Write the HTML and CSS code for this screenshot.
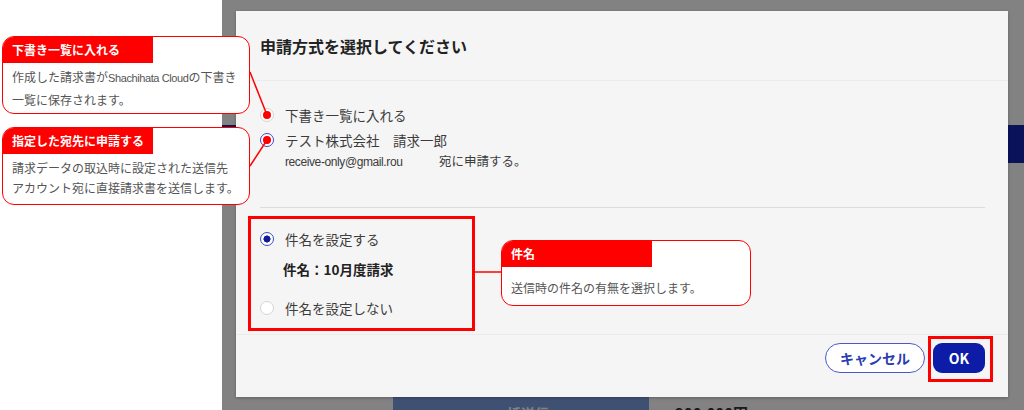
FILE: index.html
```html
<!DOCTYPE html>
<html lang="ja">
<head>
    <meta charset="UTF-8">
    <meta name="viewport" content="width=device-width, initial-scale=1.0">
    <title>申請方式の選択</title>
    <link rel="stylesheet" href="styles.css">
</head>
<body>
    <div class="screen">
        <div class="gutter"></div>

        <div class="app">
            <div class="app-band"></div>
            <div class="app-row">
                <div class="app-cell">一括送信</div>
                <div class="app-amount">200,000円</div>
            </div>

            <div class="overlay">
                <div class="dialog">
                    <div class="dialog-head">
                        <h2 class="dialog-title">申請方式を選択してください</h2>
                    </div>

                    <div class="dialog-body">
                        <div class="option">
                            <span class="radio"></span>
                            <span>下書き一覧に入れる</span>
                        </div>
                        <div class="option option-next">
                            <span class="radio is-on"></span>
                            <span>テスト株式会社　請求一郎</span>
                        </div>
                        <div class="option-sub"><span class="latin">receive-only@gmail.rou</span>　宛に申請する。</div>

                        <hr class="divider">

                        <div class="choice-box">
                            <div class="option">
                                <span class="radio is-on"></span>
                                <span>件名を設定する</span>
                            </div>
                            <div class="subject">件名：10月度請求</div>
                            <div class="option option-last">
                                <span class="radio"></span>
                                <span>件名を設定しない</span>
                            </div>
                        </div>
                    </div>

                    <div class="dialog-foot">
                        <button type="button" class="btn btn-outline">キャンセル</button>
                        <button type="button" class="btn btn-primary">OK</button>
                    </div>
                </div>
            </div>
        </div>

        <!-- annotations drawn over the screenshot -->
        <div class="notes">
            <svg class="links" width="1024" height="410" viewBox="0 0 1024 410">
                <line x1="250" y1="72" x2="267" y2="115" stroke="#ff0000" stroke-width="1.5"/>
                <line x1="250" y1="166" x2="267" y2="140" stroke="#ff0000" stroke-width="1.5"/>
                <line x1="475" y1="272" x2="501" y2="272" stroke="#ff0000" stroke-width="1.5"/>
                <circle cx="267" cy="115" r="4" fill="#ff0000"/>
                <circle cx="267" cy="140" r="4" fill="#ff0000"/>
            </svg>

            <div class="callout callout-draft">
                <div class="callout-head">下書き一覧に入れる</div>
                <div class="callout-body">作成した請求書が<span class="latin-sm">Shachihata Cloud</span>の下書き<br>一覧に保存されます。</div>
            </div>

            <div class="callout callout-send">
                <div class="callout-head">指定した宛先に申請する</div>
                <div class="callout-body">請求データの取込時に設定された送信先<br>アカウント宛に直接請求書を送信します。</div>
            </div>

            <div class="callout callout-subject">
                <div class="callout-head">件名</div>
                <div class="callout-body">送信時の件名の有無を選択します。</div>
            </div>

            <div class="mark-ok"></div>
        </div>
    </div>
</body>
</html>
```

FILE: styles.css
```css
html, body {
    margin: 0;
    padding: 0;
}
body {
    font-family: "Noto Sans CJK JP", "Noto Sans", sans-serif;
    background-color: #fff;
}
.screen {
    position: relative;
    display: flex;
    width: 1024px;
    height: 410px;
    overflow: hidden;
}
.gutter {
    width: 222px;
    flex: none;
    background-color: #fff;
}

/* page underneath the modal */
.app {
    position: relative;
    flex: 1;
    background-color: #fff;
}
.app-band {
    margin-top: 125px;
    height: 38px;
    background-color: #1524b0;
}
.app-row {
    display: flex;
    margin-top: 234px;
}
.app-cell {
    width: 256px;
    height: 30px;
    margin-left: 171px;
    padding-top: 6px;
    box-sizing: border-box;
    background-color: #7ca0e0;
    color: #fff;
    font-size: 14px;
    font-weight: bold;
    text-align: center;
}
.app-amount {
    margin-left: 26px;
    padding-top: 5px;
    font-size: 15px;
    font-weight: bold;
    color: #333;
}

/* modal */
.overlay {
    position: absolute;
    top: 0;
    left: 0;
    right: 0;
    bottom: 0;
    padding: 11px 16px 0 14px;
    background-color: rgba(0, 0, 0, 0.49);
}
.dialog {
    display: flex;
    flex-direction: column;
    height: 386px;
    background-color: #f5f5f5;
    box-shadow: 0 1px 3px rgba(0, 0, 0, 0.25);
}
.dialog-head {
    display: flex;
    align-items: center;
    height: 70px;
    box-sizing: border-box;
    padding: 0 24px;
    border-bottom: 1px solid #ebebeb;
}
.dialog-title {
    margin: 0;
    font-size: 16px;
    font-weight: bold;
    color: #222;
}
.dialog-body {
    flex: 1;
    padding: 24px 23px 0 24px;
}
.option {
    display: flex;
    align-items: center;
    gap: 11px;
    height: 20px;
    font-size: 13.5px;
    color: #3c3c3c;
}
.option-next {
    margin-top: 5px;
}
.option-sub {
    margin-top: 1px;
    padding-left: 25px;
    line-height: 20px;
    font-size: 12.5px;
    color: #3c3c3c;
}
.latin {
    font-family: "Liberation Sans", sans-serif;
    font-size: 12px;
    letter-spacing: -0.4px;
    margin-right: 24px;
}
.radio {
    flex: none;
    width: 14px;
    height: 14px;
    box-sizing: border-box;
    border: 1px solid #d4d4d4;
    border-radius: 50%;
    background-color: #fff;
}
.radio.is-on {
    border: 1.5px solid #3a4cc4;
    background: radial-gradient(circle, #0d1a9e 3.3px, #fff 3.8px);
}
.divider {
    margin: 35px 0 0;
    border: 0;
    border-top: 1px solid #dcdcdc;
}
.choice-box {
    width: 227px;
    margin: 8px 0 0 -12px;
    padding: 10px 9px;
    box-sizing: border-box;
    border: 3px solid #ff0000;
}
.subject {
    margin-top: 10px;
    padding-left: 23px;
    line-height: 20px;
    font-size: 13.5px;
    font-weight: bold;
    color: #222;
}
.option-last {
    margin-top: 19px;
}
.dialog-foot {
    display: flex;
    justify-content: flex-end;
    align-items: flex-start;
    gap: 8px;
    height: 63px;
    box-sizing: border-box;
    padding: 8px 23px 0;
    border-top: 1px solid #ebebeb;
}
.btn {
    height: 30px;
    font-family: "Noto Sans CJK JP", sans-serif;
    font-size: 14px;
    font-weight: bold;
    cursor: pointer;
}
.btn-outline {
    width: 100px;
    border: 1px solid #4a5bc6;
    border-radius: 15px;
    background-color: #fff;
    color: #2c3db2;
}
.btn-primary {
    width: 52px;
    border: none;
    border-radius: 9px;
    background-color: #0c1ca6;
    color: #fff;
}

/* annotations */
.notes {
    position: absolute;
    top: 0;
    left: 0;
    right: 0;
    bottom: 0;
    pointer-events: none;
}
.links {
    position: absolute;
    top: 0;
    left: 0;
}
.callout {
    position: absolute;
    left: 2px;
    width: 248px;
    box-sizing: border-box;
    border: 1px solid #ff0000;
    border-radius: 12px;
    background-color: #fff;
    overflow: hidden;
}
.callout-head {
    width: 150px;
    height: 26px;
    box-sizing: border-box;
    padding-left: 9px;
    background-color: #ff0000;
    color: #fff;
    font-size: 12px;
    font-weight: bold;
    line-height: 26px;
}
.callout-body {
    padding: 3px 9px 0;
    font-size: 12px;
    line-height: 21px;
    color: #555;
}
.latin-sm {
    font-family: "Liberation Sans", sans-serif;
    font-size: 11px;
    letter-spacing: -0.4px;
}
.callout-draft {
    top: 36px;
    height: 78px;
}
.callout-send {
    top: 127px;
    height: 78px;
}
.callout-send .callout-body {
    padding-top: 4px;
    line-height: 20px;
}
.callout-subject {
    left: 501px;
    top: 240px;
    width: 250px;
    height: 66px;
}
.callout-subject .callout-body {
    padding-top: 11px;
    line-height: 20px;
}
.mark-ok {
    position: absolute;
    left: 928px;
    top: 336px;
    width: 65px;
    height: 46px;
    box-sizing: border-box;
    border: 3px solid #ff0000;
}
```
